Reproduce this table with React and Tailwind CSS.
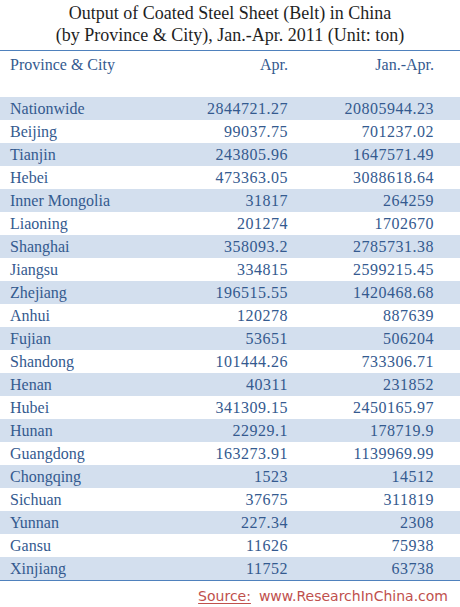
import React from "react";

const rows = [
  ["Nationwide", "2844721.27", "20805944.23"],
  ["Beijing", "99037.75", "701237.02"],
  ["Tianjin", "243805.96", "1647571.49"],
  ["Hebei", "473363.05", "3088618.64"],
  ["Inner Mongolia", "31817", "264259"],
  ["Liaoning", "201274", "1702670"],
  ["Shanghai", "358093.2", "2785731.38"],
  ["Jiangsu", "334815", "2599215.45"],
  ["Zhejiang", "196515.55", "1420468.68"],
  ["Anhui", "120278", "887639"],
  ["Fujian", "53651", "506204"],
  ["Shandong", "101444.26", "733306.71"],
  ["Henan", "40311", "231852"],
  ["Hubei", "341309.15", "2450165.97"],
  ["Hunan", "22929.1", "178719.9"],
  ["Guangdong", "163273.91", "1139969.99"],
  ["Chongqing", "1523", "14512"],
  ["Sichuan", "37675", "311819"],
  ["Yunnan", "227.34", "2308"],
  ["Gansu", "11626", "75938"],
  ["Xinjiang", "11752", "63738"],
];

export default function App() {
  return (
    <div className="w-[460px] h-[607px] bg-white font-['Liberation_Serif',serif] text-[#345a8f]">
      {/* title */}
      <div className="pt-[2px] text-center text-[18px] leading-[22px] text-[#1f1f1f]">
        <div>Output of Coated Steel Sheet (Belt) in China</div>
        <div>(by Province &amp; City), Jan.-Apr. 2011 (Unit: ton)</div>
      </div>

      <div className="mt-[4px] border-t border-b border-[#4f81bd]">
        <div className="grid grid-cols-[1fr_146px_146px] pr-[26px] h-[46px] text-[16px] leading-[24px] pt-[2px]">
          <div className="pl-[10px]">Province &amp; City</div>
          <div className="text-right">Apr.</div>
          <div className="text-right">Jan.-Apr.</div>
        </div>
        {rows.map((r, i) => (
          <div
            key={r[0]}
            className={
              "grid grid-cols-[1fr_146px_146px] pr-[26px] h-[23px] items-center text-[16px] leading-[23px] " +
              (i % 2 === 0 ? "bg-[#d3dfee]" : "bg-white")
            }
          >
            <div className="pl-[10px]">{r[0]}</div>
            <div className="text-right tracking-[0.5px]">{r[1]}</div>
            <div className="text-right tracking-[0.5px]">{r[2]}</div>
          </div>
        ))}
      </div>

      <div className="flex justify-end pr-[12px] pt-[6px] font-['DejaVu_Sans',sans-serif] text-[14px] leading-[18px] text-[#c0504d]">
        <span className="underline underline-offset-2">Source:</span>
        <span className="ml-[8px]">www.ResearchInChina.com</span>
      </div>
    </div>
  );
}
